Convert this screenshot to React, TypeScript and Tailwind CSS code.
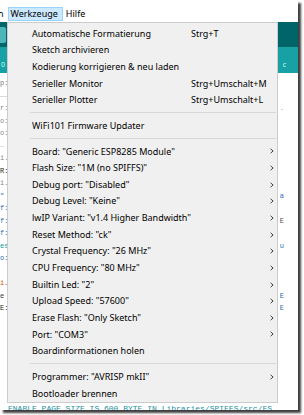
import type { ReactNode } from "react";

type Item =
  | { sep: true }
  | { sep?: false; label: string; shortcut?: string; sub?: boolean };

const ITEMS: Item[] = [
  { label: "Automatische Formatierung", shortcut: "Strg+T" },
  { label: "Sketch archivieren" },
  { label: "Kodierung korrigieren & neu laden" },
  { label: "Serieller Monitor", shortcut: "Strg+Umschalt+M" },
  { label: "Serieller Plotter", shortcut: "Strg+Umschalt+L" },
  { sep: true },
  { label: "WiFi101 Firmware Updater" },
  { sep: true },
  { label: 'Board: "Generic ESP8285 Module"', sub: true },
  { label: 'Flash Size: "1M (no SPIFFS)"', sub: true },
  { label: 'Debug port: "Disabled"', sub: true },
  { label: 'Debug Level: "Keine"', sub: true },
  { label: 'lwIP Variant: "v1.4 Higher Bandwidth"', sub: true },
  { label: 'Reset Method: "ck"', sub: true },
  { label: 'Crystal Frequency: "26 MHz"', sub: true },
  { label: 'CPU Frequency: "80 MHz"', sub: true },
  { label: 'Builtin Led: "2"', sub: true },
  { label: 'Upload Speed: "57600"', sub: true },
  { label: 'Erase Flash: "Only Sketch"', sub: true },
  { label: 'Port: "COM3"', sub: true },
  { label: "Boardinformationen holen" },
  { sep: true },
  { label: 'Programmer: "AVRISP mkII"', sub: true },
  { label: "Bootloader brennen" },
];

// code lines behind the menu, only both ends peek out
const CODE: { left: ReactNode; right?: ReactNode }[] = [
  { left: <span className="text-[#777]">p:</span> },
  { left: <span className="text-[#bbb]">——</span> },
  { left: <span className="text-[#888]">r:</span>, right: <span className="text-[#999]">.</span> },
  { left: <span className="text-[#888]">o:</span> },
  { left: <span className="text-[#888]">o:</span> },
  { left: <span className="text-[#ccc]">—</span> },
  { left: <span className="text-[#888]">i.</span> },
  { left: <span className="text-[#222]">R:</span> },
  { left: <span className="text-[#888]">i.</span> },
  { left: <span className="text-[#2a6fb0]">"</span>, right: <span className="text-[#2a6fb0]">a</span> },
  { left: <span className="text-[#2a6fb0]">f:</span> },
  { left: <span className="text-[#2a6fb0]">f:</span>, right: <span className="text-[#555]">E</span> },
  { left: <span className="text-[#2a6fb0]">f:</span> },
  { left: <span className="text-[#00979c]">es</span>, right: <span className="text-[#2a6fb0]">u</span> },
  { left: <span className="text-[#2a6fb0]">o:</span> },
  { left: <span className="text-[#888]"> </span> },
  { left: <span className="text-[#d35400]">i.</span> },
  { left: <span className="text-[#333]">e</span>, right: <span className="text-[#2a6fb0]">E</span> },
  { left: <span className="text-[#222]">E:</span>, right: <span className="text-[#2a6fb0]">E</span> },
];

function Chevron() {
  return (
    <svg width="4" height="6" viewBox="0 0 4 6" className="shrink-0">
      <polyline points="0.6,0.8 3.1,3 0.6,5.2" fill="none" stroke="#444" strokeWidth="1" />
    </svg>
  );
}

export default function App() {
  return (
    <div
      className="h-[415px] w-[304px] overflow-hidden bg-white"
      style={{ fontFamily: '"Segoe UI", "Noto Sans", sans-serif' }}
    >
      <div className="relative flex h-[410px] w-[298px] flex-col overflow-hidden bg-white shadow-[3px_3px_2px_rgba(0,0,0,0.75)]">
        {/* Menu bar */}
        <div className="flex h-[22px] shrink-0 items-end pb-[1px] text-[9px] text-black">
          <span className="-ml-[2px] flex h-[14px] items-center pr-[4px]">n</span>
          <span className="flex h-[14px] items-center border border-[#99d1ff] bg-[#cce8ff] pl-[2px] pr-[4px]">
            Werkzeuge
          </span>
          <span className="flex h-[14px] items-center px-[3px]">Hilfe</span>
        </div>

        {/* Editor behind the menu */}
        <div className="flex h-[25px] shrink-0 items-center bg-[#006468]">
          <div className="ml-[-8px] h-[16px] w-[14px] rounded-[2px] bg-[#4db6b9]" />
        </div>
        <div className="flex h-[26px] shrink-0 items-end justify-between bg-[#17a1a5] pb-[3px] text-[7px] text-[#cfe]">
          <span className="pl-[1px]">0</span>
          <span className="pr-[12px]">c</span>
        </div>
        <div className="flex flex-1 flex-col pt-[4px] font-mono text-[7px] leading-[12.5px]">
          {CODE.map((c, i) => (
            <div key={i} className="flex h-[12.5px] justify-between pr-[14px]">
              <span className="whitespace-pre">{c.left}</span>
              <span>{c.right}</span>
            </div>
          ))}
          <div className="mt-auto h-[6px] overflow-hidden whitespace-nowrap pl-[8px] text-[8px] leading-[9px] text-[#1d8fa0]">
            ENABLE_PAGE_SIZE IS 600 BYTE IN Libraries/SPIFFS/src/FS
          </div>
        </div>

        {/* Werkzeuge dropdown */}
        <div className="absolute left-[7px] top-[22px] w-[271px] border border-[#cccccc] bg-[#f0f0f0] pt-[2px] text-[9px] text-black">
          {ITEMS.map((it, i) =>
            it.sep ? (
              <div key={i} className="flex h-[9px] items-center">
                <div className="ml-[22px] mr-[1px] h-px flex-1 bg-[#d7d7d7]" />
              </div>
            ) : (
              <div key={i} className="flex h-[16.67px] items-center pl-[24px] pr-[3px]">
                <span className="w-[159px] shrink-0 whitespace-nowrap">{it.label}</span>
                <span className="flex-1 whitespace-nowrap">{it.shortcut}</span>
                {it.sub && <Chevron />}
              </div>
            )
          )}
        </div>
      </div>
    </div>
  );
}
